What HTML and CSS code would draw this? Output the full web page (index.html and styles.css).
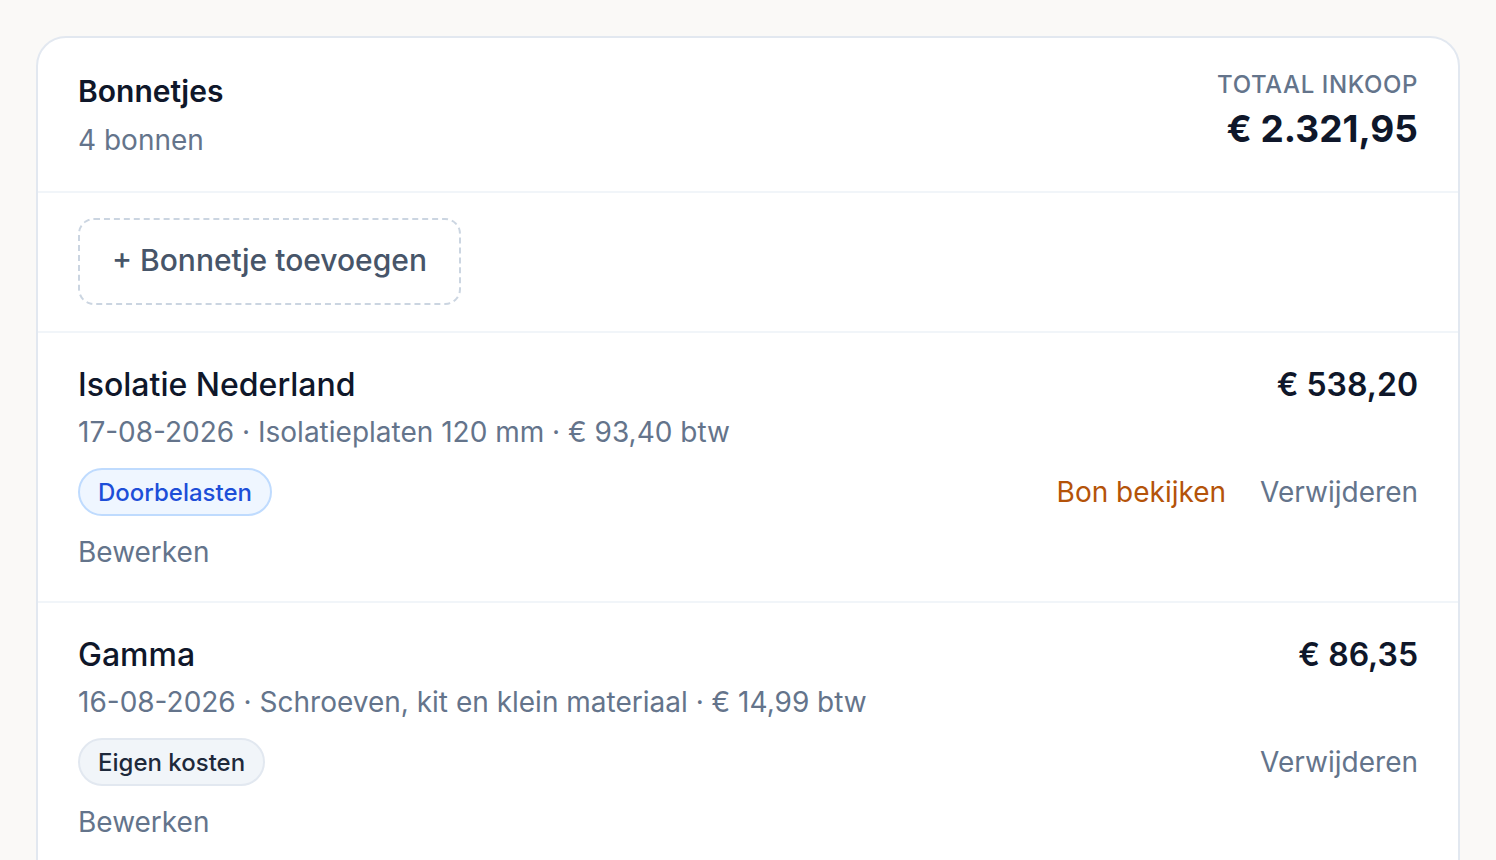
FILE: index.html
```html
<!DOCTYPE html>
<html lang="nl">
<head>
<meta charset="utf-8">
<title>Bonnetjes</title>
<link rel="stylesheet" href="styles.css">
</head>
<body>
<div class="card">
  <header class="head">
    <div class="head-left">
      <h1 class="title">Bonnetjes</h1>
      <div class="count">4 bonnen</div>
    </div>
    <div class="head-right">
      <div class="total-label">Totaal inkoop</div>
      <div class="total-value">€ 2.321,95</div>
    </div>
  </header>
  <section class="add">
    <button class="add-btn">+ Bonnetje toevoegen</button>
  </section>
  <ul class="list">
    <li class="row">
      <div class="row-top">
        <div class="name">Isolatie Nederland</div>
        <div class="amount">€ 538,20</div>
      </div>
      <div class="meta">17-08-2026 · Isolatieplaten 120 mm · € 93,40 btw</div>
      <div class="row-mid">
        <span class="badge badge-blue">Doorbelasten</span>
        <div class="actions">
          <a class="link link-amber">Bon bekijken</a>
          <a class="link link-muted">Verwijderen</a>
        </div>
      </div>
      <a class="link link-muted edit">Bewerken</a>
    </li>
    <li class="row">
      <div class="row-top">
        <div class="name">Gamma</div>
        <div class="amount">€ 86,35</div>
      </div>
      <div class="meta">16-08-2026 · Schroeven, kit en klein materiaal · € 14,99 btw</div>
      <div class="row-mid">
        <span class="badge badge-gray">Eigen kosten</span>
        <div class="actions">
          <a class="link link-muted">Verwijderen</a>
        </div>
      </div>
      <a class="link link-muted edit">Bewerken</a>
    </li>
  </ul>
</div>
</body>
</html>
```

FILE: styles.css
```css
* { box-sizing: border-box; }
html, body { margin: 0; padding: 0; }
body {
  background: #faf9f7;
  font-family: Inter, "Noto Sans", "Liberation Sans", sans-serif;
  color: #0f172a;
  padding: 36px 36px 0 36px;
}
.card {
  background: #ffffff;
  border: 2px solid #e2e8f0;
  border-radius: 30px;
  overflow: hidden;
  min-height: 900px;
}
.head {
  display: flex;
  justify-content: space-between;
  align-items: flex-start;
  padding: 33px 40px 31px;
  border-bottom: 2px solid #f1f5f9;
}
.title {
  margin: 0;
  font-size: 30px;
  line-height: 40px;
  font-weight: 600;
  color: #0f172a;
}
.count {
  margin-top: 9px;
  font-size: 28px;
  line-height: 40px;
  color: #64748b;
}
.head-right { text-align: right; }
.total-label {
  font-size: 24px;
  line-height: 28px;
  text-transform: uppercase;
  letter-spacing: 0.025em;
  color: #64748b;
  font-weight: 500;
}
.total-value {
  margin-top: 8px;
  font-size: 37px;
  line-height: 44px;
  font-weight: 700;
  color: #0f172a;
}
.add {
  padding: 25px 40px 26px;
  border-bottom: 2px solid #f1f5f9;
}
.add-btn {
  display: inline-block;
  font-family: inherit;
  background: #ffffff;
  border: 2px dashed #cbd5e1;
  border-radius: 16px;
  padding: 19px 32px 22px;
  font-size: 30px;
  line-height: 42px;
  font-weight: 500;
  color: #475569;
}
.list { list-style: none; margin: 0; padding: 0; }
.row {
  padding: 31px 40px 28px;
  border-bottom: 2px solid #f1f5f9;
}
.row-top {
  display: flex;
  justify-content: space-between;
  align-items: center;
}
.name {
  font-size: 32px;
  line-height: 42px;
  font-weight: 500;
  color: #0f172a;
}
.amount {
  font-size: 32px;
  line-height: 42px;
  font-weight: 600;
  color: #0f172a;
}
.meta {
  margin-top: 5px;
  font-size: 28px;
  line-height: 42px;
  color: #64748b;
}
.row-mid {
  margin-top: 15px;
  display: flex;
  justify-content: space-between;
  align-items: center;
}
.badge {
  display: inline-flex;
  align-items: center;
  height: 48px;
  padding: 0 18px;
  border-radius: 999px;
  border: 2px solid;
  font-size: 24px;
  font-weight: 500;
}
.badge-blue { background: #eff6ff; border-color: #bfdbfe; color: #1d4ed8; }
.badge-gray { background: #f1f5f9; border-color: #e2e8f0; color: #1e293b; }
.actions { display: flex; gap: 34px; }
.link {
  font-size: 28px;
  line-height: 42px;
  text-decoration: none;
}
.link-amber { color: #b45309; }
.link-muted { color: #64748b; }
.edit { display: block; margin-top: 15px; }
```
